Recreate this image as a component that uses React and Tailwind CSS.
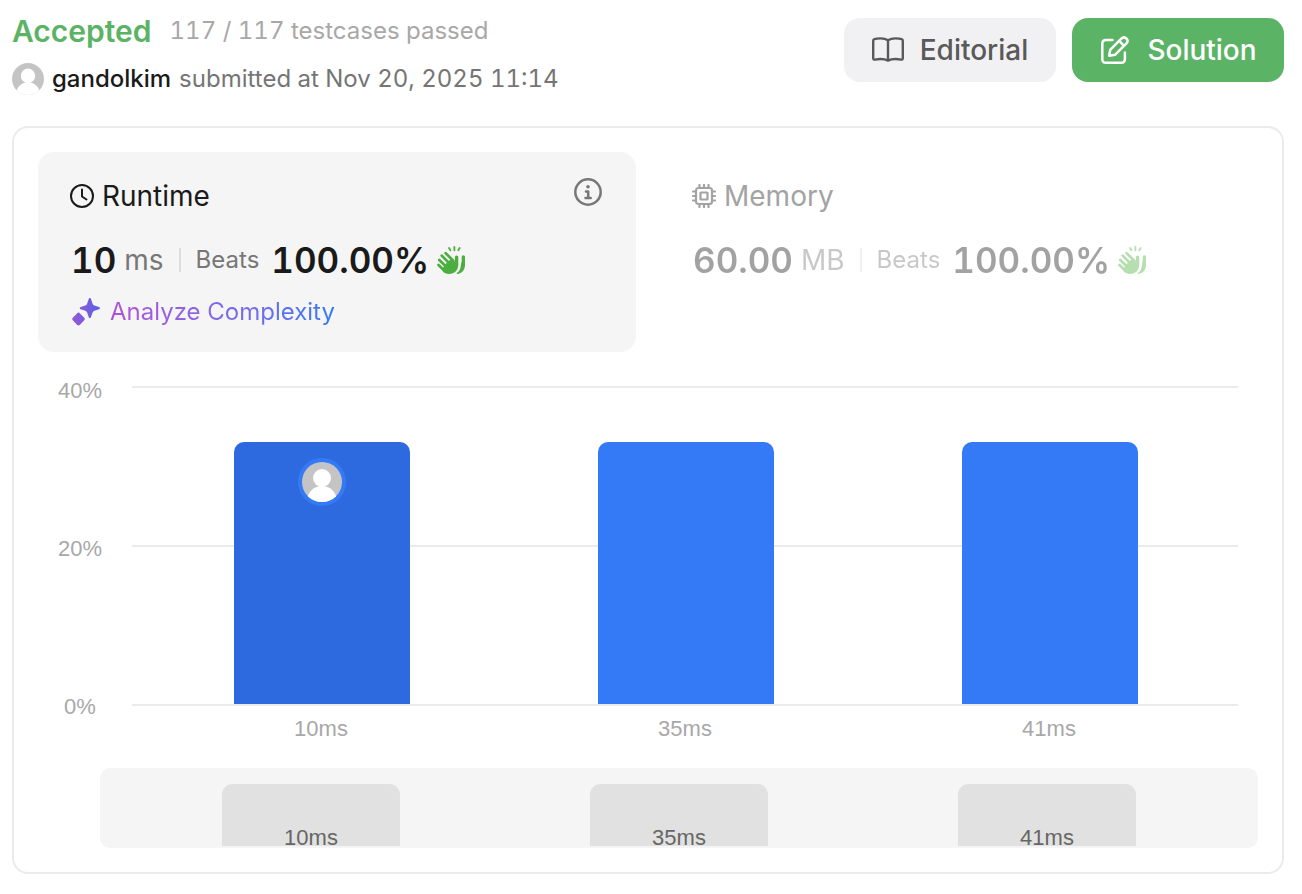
const BARS = [
  { label: "10ms", percent: 33, mine: true },
  { label: "35ms", percent: 33, mine: false },
  { label: "41ms", percent: 33, mine: false },
];
const MAX_PERCENT = 40;

function Avatar({ className }) {
  return (
    <svg viewBox="0 0 40 40" className={className} aria-hidden="true">
      <defs>
        <clipPath id="avatar-clip">
          <circle cx="20" cy="20" r="20" />
        </clipPath>
      </defs>
      <g clipPath="url(#avatar-clip)">
        <rect width="40" height="40" fill="#c4c4c4" />
        <circle cx="20" cy="16" r="9" fill="#fff" />
        <ellipse cx="20" cy="38" rx="14.5" ry="14" fill="#fff" />
      </g>
    </svg>
  );
}

function BookIcon() {
  return (
    <svg viewBox="0 0 32 26" className="h-[26px] w-8" fill="none" stroke="currentColor" strokeWidth="2.4" strokeLinejoin="round" strokeLinecap="round" aria-hidden="true">
      <path d="M16 3.2C14 1.9 11.5 1.4 8.5 1.4C6 1.4 4 1.6 2.4 2.1C1.6 2.4 1.2 2.9 1.2 3.7V21.2C1.2 22.4 2 22.8 3 22.6C4.7 22.2 6.4 22 8.5 22C11.5 22 14 22.5 16 23.6C18 22.5 20.5 22 23.5 22C25.6 22 27.3 22.2 29 22.6C30 22.8 30.8 22.4 30.8 21.2V3.7C30.8 2.9 30.4 2.4 29.6 2.1C28 1.6 26 1.4 23.5 1.4C20.5 1.4 18 1.9 16 3.2ZM16 3.2V23.6" />
    </svg>
  );
}

function PenIcon() {
  return (
    <svg viewBox="0 0 28 28" className="size-7" fill="none" stroke="currentColor" strokeWidth="2.5" strokeLinejoin="round" strokeLinecap="round" aria-hidden="true">
      <path d="M11.5 4H5C2.7 4 1.3 5.5 1.3 7.8V22.9C1.3 25.2 2.7 26.7 5 26.7H20.1C22.4 26.7 23.9 25.2 23.9 22.9V16.5" />
      <path d="M8.2 19.8L9.2 13.8L20.3 2.7C21.9 1.1 24 1.1 25.4 2.5C26.8 3.9 26.8 6 25.2 7.6L14.2 18.7ZM18.2 4.9L23.1 9.8" />
    </svg>
  );
}

function ClockIcon() {
  return (
    <svg viewBox="0 0 24 24" className="size-6" fill="none" stroke="currentColor" strokeWidth="2" strokeLinecap="round" strokeLinejoin="round" aria-hidden="true">
      <circle cx="12" cy="12" r="11" />
      <path d="M12 5.5V12.5L16.5 15.5" />
    </svg>
  );
}

function ChipIcon() {
  return (
    <svg viewBox="0 0 24 24" className="size-6" fill="none" stroke="currentColor" strokeWidth="2.2" strokeLinecap="round" strokeLinejoin="round" aria-hidden="true">
      <rect x="4" y="4" width="16" height="16" rx="2.5" />
      <rect x="8.5" y="8.5" width="7" height="7" rx="0.5" />
      <path d="M7.5 1V4M12 1V4M16.5 1V4M7.5 20V23M12 20V23M16.5 20V23M1 7.5H4M1 12H4M1 16.5H4M20 7.5H23M20 12H23M20 16.5H23" />
    </svg>
  );
}

function InfoIcon() {
  return (
    <svg viewBox="0 0 28 28" className="size-7" fill="none" stroke="currentColor" strokeWidth="2.5" strokeLinecap="round" strokeLinejoin="round" aria-hidden="true">
      <circle cx="14" cy="14" r="12.7" />
      <circle cx="14" cy="8.7" r="1.8" fill="currentColor" stroke="none" />
      <path d="M12 13.5H14.2V19.8M11.5 19.9H16.7" />
    </svg>
  );
}

function SparkleIcon() {
  return (
    <svg viewBox="0 0 28 28" className="size-7" aria-hidden="true">
      <defs>
        <linearGradient id="sparkle-fill" x1="0" y1="0" x2="1" y2="0">
          <stop offset="0" stopColor="#9558d6" />
          <stop offset="1" stopColor="#5a61e8" />
        </linearGradient>
      </defs>
      <path
        fill="url(#sparkle-fill)"
        d="M17.8 0C18.5 0 18.8 0.5 19 1.1L20.6 5.8C20.9 6.7 21.5 7.3 22.4 7.6L27 9.1C27.6 9.3 28 9.6 28 10.2S27.6 11.1 27 11.3L22.4 12.8C21.5 13.1 20.9 13.7 20.6 14.6L19 19.1C18.8 19.7 18.5 20.2 17.8 20.2S16.9 19.7 16.7 19.1L15.1 14.6C14.8 13.7 14.2 13.1 13.3 12.8L8.7 11.3C8.1 11.1 7.7 10.8 7.7 10.2S8.1 9.3 8.7 9.1L13.3 7.6C14.2 7.3 14.8 6.7 15.1 5.8L16.7 1.1C16.9 0.5 17.1 0 17.8 0ZM6.5 14.6C7.1 14.6 7.6 15 8 15.4L12 19.6C12.5 20.1 12.8 20.6 12.8 21.1S12.5 22.1 12 22.6L8 26.8C7.6 27.2 7.1 27.6 6.5 27.6S5.4 27.2 5 26.8L1 22.6C0.5 22.1 0.2 21.6 0.2 21.1S0.5 20.1 1 19.6L5 15.4C5.4 15 5.9 14.6 6.5 14.6Z"
      />
    </svg>
  );
}

function ClapIcon() {
  return (
    <svg viewBox="0 0 28 28" className="ml-2 size-7 text-[#4cae3f]" fill="none" stroke="currentColor" strokeLinecap="round" strokeLinejoin="round" aria-hidden="true">
      <path strokeWidth="2.7" d="M8.6 7.1L16.5 15M4.7 9.6L13 18M2.300 14L10 21.500M1.500 19L8 25.200" />
      <path
        fill="currentColor"
        stroke="none"
        d="M14.500 12.800L18 16.200V11.300C18 10.200 18.700 9.500 19.700 9.500S21.300 10.200 21.300 11.300V18.500C21.300 24.200 17.500 28 12 28C9.300 28 7.400 27 5.800 25.500L5.500 22.700L7.500 19.500L10 16.500Z"
      />
      <path
        fill="currentColor"
        stroke="none"
        d="M26.400 9.300C27.400 9.300 28 10 28 11V18.500C28 24 25 27.400 20.200 28C19.500 28 19.400 27.500 19.900 27.100C22.600 25 23.600 22.500 23.800 19.500C23.900 17.500 24.600 16.500 24.700 15V11C24.700 10 25.400 9.300 26.400 9.300Z"
      />
      <path strokeWidth="1.800" d="M12 2L13.400 4.300M17.400 1V4.300M22.700 2L21.300 4.300" />
    </svg>
  );
}

function Metric({ value, unit, beats }) {
  return (
    <div className="flex items-center px-px tabular-nums">
      <span className="text-[35px] leading-10 font-semibold text-[#1a1a1a]">{value}</span>
      <span className="ml-2 text-[28px] leading-10 text-[#777777]">{unit}</span>
      <span className="mx-[15px] h-6 w-0.5 bg-[#dcdcdc]" />
      <span className="text-2xl text-[#777777]">Beats</span>
      <span className="ml-3 text-[35px] leading-10 font-semibold text-[#1a1a1a]">{beats}</span>
      <ClapIcon />
    </div>
  );
}

export default function App() {
  return (
    <main className="bg-white pt-3 pr-[18px] pb-5 pl-3 font-[Inter,sans-serif] text-[#1a1a1a]">
      <header className="flex items-start justify-between">
        <div className="pt-px">
          <div className="flex h-9 items-center gap-[18px]">
            <h1 className="text-3xl font-semibold text-[#5bb365]">Accepted</h1>
            <span className="text-2xl text-[#a8a8a8] tabular-nums">117 / 117 testcases passed</span>
          </div>
          <div className="mt-3 flex h-9 items-center gap-2 text-2xl tabular-nums">
            <Avatar className="size-8" />
            <span className="font-medium">gandolkim</span>
            <span className="text-[#757575]">submitted at Nov 20, 2025 11:14</span>
          </div>
        </div>
        <div className="flex gap-4 pt-1.5 text-[28px] font-medium">
          <button type="button" className="flex h-16 w-[212px] items-center justify-center gap-4 rounded-2xl bg-[#f1f1f4] text-[#595959]">
            <BookIcon />
            Editorial
          </button>
          <button type="button" className="flex h-16 w-[212px] items-center justify-center gap-[18px] rounded-2xl bg-[#5bb365] pl-0.5 text-white">
            <PenIcon />
            Solution
          </button>
        </div>
      </header>

      <section className="mt-[29px] rounded-2xl border-2 border-[#ebebeb] p-6">
        <div className="grid grid-cols-2 gap-6">
          <article className="h-[200px] rounded-2xl bg-[#f5f5f5] px-8 pt-6">
            <div className="flex items-start justify-between">
              <h2 className="flex h-10 items-center gap-2 text-[28px]">
                <ClockIcon />
                Runtime
              </h2>
              <button type="button" aria-label="Runtime details" className="mt-0.5 mr-0.5 text-[#777777]">
                <InfoIcon />
              </button>
            </div>
            <div className="mt-6">
              <Metric value="10" unit="ms" beats="100.00%" />
            </div>
            <button type="button" className="mt-4 ml-0.5 flex items-center gap-2.5 text-2xl">
              <SparkleIcon />
              <span className="bg-linear-to-r from-[#af52d9] to-[#2f78f6] bg-clip-text text-transparent">Analyze Complexity</span>
            </button>
          </article>
          <article className="h-[200px] px-8 pt-6">
            <h2 className="flex h-10 items-center gap-2 text-[28px] text-[#a3a3a3]">
              <ChipIcon />
              Memory
            </h2>
            <div className="mt-6 opacity-40">
              <Metric value="60.00" unit="MB" beats="100.00%" />
            </div>
          </article>
        </div>

        <figure className="mt-[27px] font-['Liberation_Sans',sans-serif] text-[22px] leading-6 text-[#a8a8a8]">
          <div className="flex">
            <div className="flex h-[340px] w-[84px] flex-col items-center justify-between">
              <span>40%</span>
              <span>20%</span>
              <span>0%</span>
            </div>
            <div className="mr-5 ml-2.5 flex-1 pt-[7px]">
              <div className="grid h-80">
                <div className="col-start-1 row-start-1 flex flex-col justify-between">
                  <div className="h-0.5 bg-[#ebebeb]" />
                  <div className="h-0.5 bg-[#ebebeb]" />
                  <div className="h-0.5 bg-[#ebebeb]" />
                </div>
                <div className="col-start-1 row-start-1 grid grid-cols-3 items-end pr-1.5 pb-0.5 pl-2">
                  {BARS.map((bar) => (
                    <div
                      key={bar.label}
                      className={
                        bar.mine
                          ? "mx-auto flex w-[176px] items-start justify-center rounded-t-[10px] bg-[#2d6adf] pt-4"
                          : "mx-auto w-[176px] rounded-t-[10px] bg-[#347af7]"
                      }
                      style={{ height: `${(bar.percent / MAX_PERCENT) * 100}%` }}
                    >
                      {bar.mine && (
                        <span className="rounded-full bg-[#347af7] p-1">
                          <Avatar className="size-10" />
                        </span>
                      )}
                    </div>
                  ))}
                </div>
              </div>
              <div className="mt-[11px] grid grid-cols-3 px-[7px] text-center">
                {BARS.map((bar) => (
                  <span key={bar.label}>{bar.label}</span>
                ))}
              </div>
            </div>
          </div>
          <div className="mt-[27px] ml-[62px] grid h-20 grid-cols-3 rounded-[10px] bg-[#f5f5f5] px-[27px] pt-4 pb-0.5 leading-4 text-[#666666]">
            {BARS.map((bar) => (
              <div key={bar.label} className="mx-auto flex h-[62px] w-[178px] items-end justify-center rounded-t-[10px] bg-[#e1e1e1]">
                {bar.label}
              </div>
            ))}
          </div>
        </figure>
      </section>
    </main>
  );
}
